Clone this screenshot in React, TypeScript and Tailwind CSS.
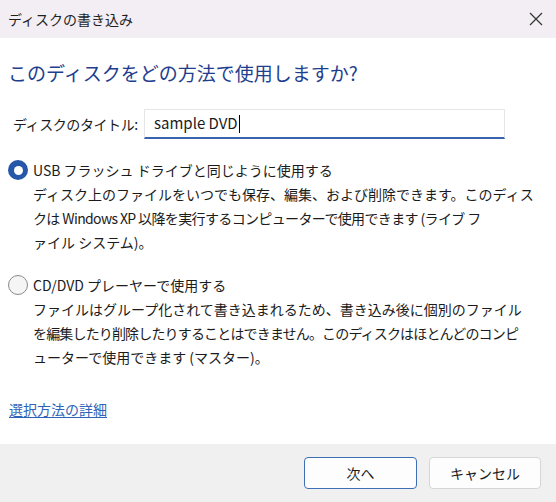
const jp = "font-['Noto_Sans_CJK_JP','Noto_Sans',sans-serif]";

function Radio({ checked }: { checked: boolean }) {
  return checked ? (
    <span className="mt-[2px] flex h-[20px] w-[20px] shrink-0 items-center justify-center rounded-full bg-[#2657a8]">
      <span className="h-[9px] w-[9px] rounded-full bg-white" />
    </span>
  ) : (
    <span className="mt-[2px] h-[20px] w-[20px] shrink-0 rounded-full border border-[#8a8a8a] bg-[#f5f5f5]" />
  );
}

// each line carries its own tracking so the wraps land where Windows put them
type Line = { text: string; cls?: string };

function Option({
  checked,
  label,
  lines,
}: {
  checked: boolean;
  label: string;
  lines: Line[];
}) {
  return (
    <div className="flex gap-[5px]">
      <Radio checked={checked} />
      <div className="whitespace-nowrap text-[14px] leading-[24px] text-[#1b1b1b]">
        <div>{label}</div>
        {lines.map((l) => (
          <div key={l.text} className={l.cls}>
            {l.text}
          </div>
        ))}
      </div>
    </div>
  );
}

export default function App() {
  return (
    <div className={`flex h-[502px] w-[556px] flex-col bg-white ${jp}`}>
      <div className="flex h-[38px] items-center justify-between bg-[#f3eef3] pl-[8px] pr-[12px]">
        <span className="text-[14px] text-[#1f1f1f]">ディスクの書き込み</span>
        <svg width="14" height="14" viewBox="0 0 14 14" className="mr-[1px]">
          <path d="M1 1L13 13M13 1L1 13" stroke="#333" strokeWidth="1.2" />
        </svg>
      </div>

      <div className="flex flex-1 flex-col px-[8px] pt-[21px]">
        <h1 className="text-[19px] leading-[28px] text-[#1e3e8e]">
          このディスクをどの方法で使用しますか?
        </h1>

        <div className="mt-[22px] flex items-center pl-[5px]">
          <span className="w-[131px] text-[14px] tracking-[-0.03em] text-[#1b1b1b]">ディスクのタイトル:</span>
          <div className="flex h-[30px] w-[361px] items-center border border-[#e6e6e6] border-b-2 border-b-[#3a63ad] pl-[9px] text-[15px] text-[#1b1b1b]">
            sample DVD
            <span className="ml-[1px] h-[18px] w-[1px] bg-black" />
          </div>
        </div>

        <div className="mt-[19px]">
          <Option
            checked
            label="USB フラッシュ ドライブと同じように使用する"
            lines={[
              { text: "ディスク上のファイルをいつでも保存、編集、および削除できます。このディス" },
              {
                text: "クは Windows XP 以降を実行するコンピューターで使用できます (ライブ フ",
                cls: "tracking-[-0.045em]",
              },
              { text: "ァイル システム)。" },
            ]}
          />
        </div>

        <div className="mt-[19px]">
          <Option
            checked={false}
            label="CD/DVD プレーヤーで使用する"
            lines={[
              { text: "ファイルはグループ化されて書き込まれるため、書き込み後に個別のファイル" },
              {
                text: "を編集したり削除したりすることはできません。このディスクはほとんどのコンピ",
                cls: "tracking-[-0.06em]",
              },
              { text: "ューターで使用できます (マスター)。" },
            ]}
          />
        </div>

        <a className="mt-[30px] w-fit pl-[1px] text-[14px] text-[#2f63b8] underline underline-offset-2">
          選択方法の詳細
        </a>
      </div>

      <div className="flex h-[58px] items-center justify-end gap-[12px] bg-[#f0f0f0] pr-[15px]">
        <button className="h-[32px] w-[113px] rounded-[4px] border border-[#3d6fb5] bg-[#fdfdfd] text-[14px] text-[#1b1b1b]">
          次へ
        </button>
        <button className="h-[32px] w-[112px] rounded-[4px] border border-[#d6d6d6] bg-[#fdfdfd] text-[14px] text-[#1b1b1b]">
          キャンセル
        </button>
      </div>
    </div>
  );
}
